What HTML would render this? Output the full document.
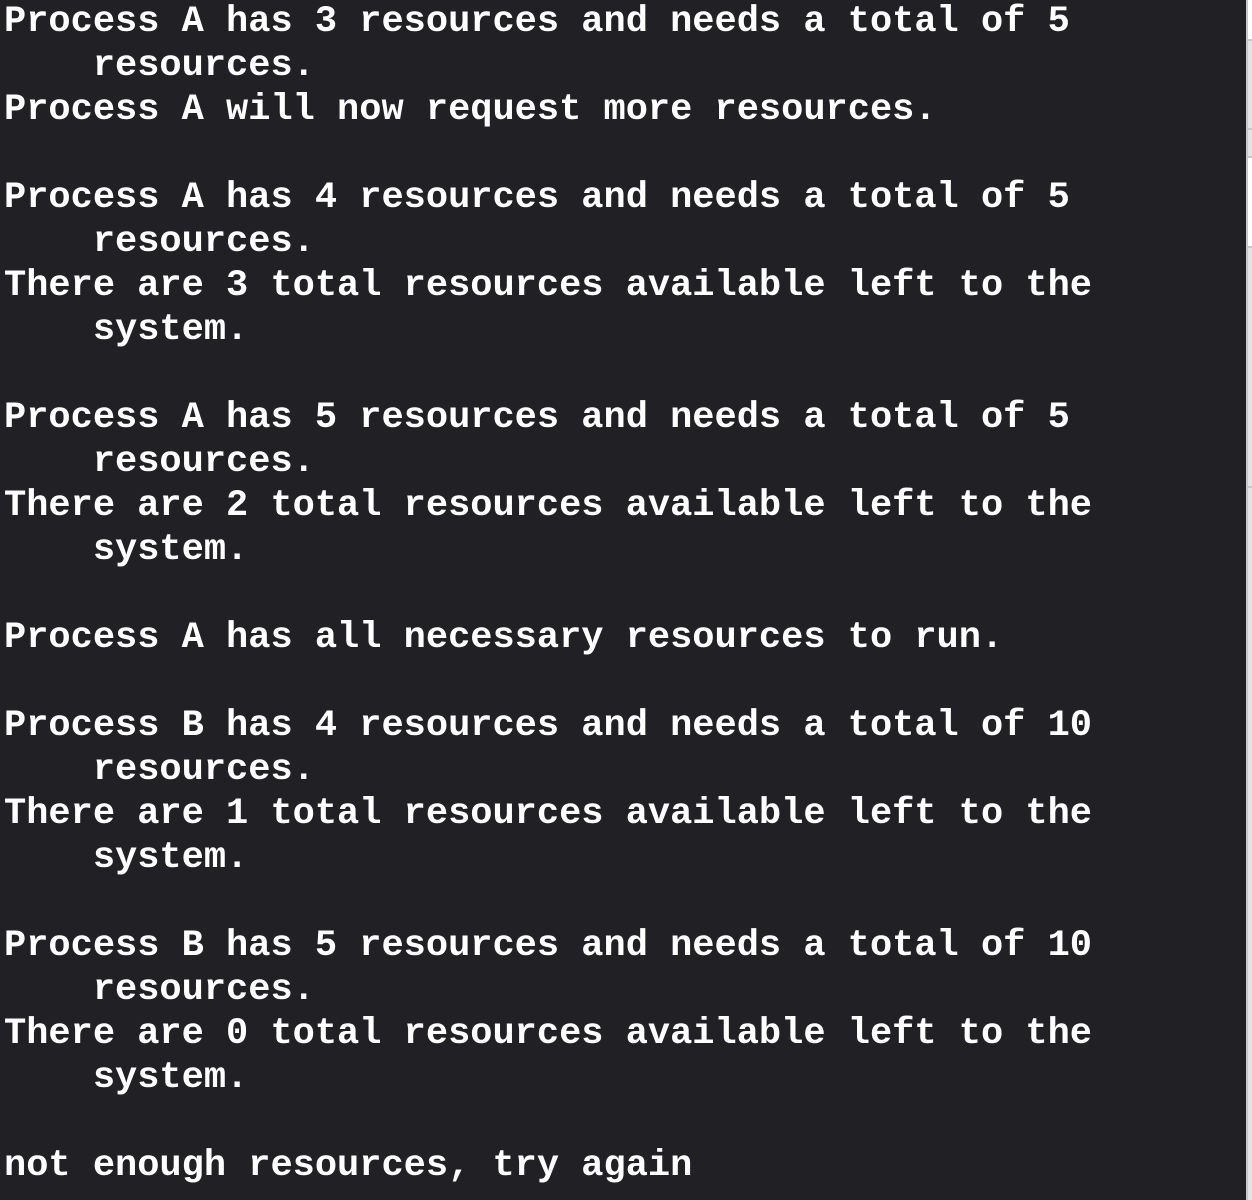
<!DOCTYPE html>
<html><head><meta charset="utf-8"><style>
html,body{margin:0;padding:0;width:1252px;height:1200px;overflow:hidden;background:#202025;}
pre{position:absolute;left:4px;top:0px;margin:0;font-family:"Liberation Mono",monospace;font-weight:bold;font-size:37px;line-height:44px;color:#ffffff;}
.strip{position:absolute;left:1246px;width:6px;}
</style></head><body>
<pre>Process A has 3 resources and needs a total of 5
    resources.
Process A will now request more resources.

Process A has 4 resources and needs a total of 5
    resources.
There are 3 total resources available left to the
    system.

Process A has 5 resources and needs a total of 5
    resources.
There are 2 total resources available left to the
    system.

Process A has all necessary resources to run.

Process B has 4 resources and needs a total of 10
    resources.
There are 1 total resources available left to the
    system.

Process B has 5 resources and needs a total of 10
    resources.
There are 0 total resources available left to the
    system.

not enough resources, try again</pre>
<div class="strip" style="top:0;height:1200px;background:#e4e4e4;border-left:2px solid #c8c8c8;box-sizing:border-box;"></div>
<div class="strip" style="left:1248px;width:4px;top:0;height:39px;background:#ffffff;"></div>
<div class="strip" style="left:1248px;width:4px;top:157px;height:90px;background:#ffffff;"></div>
<div class="strip" style="top:39px;height:2px;background:#c8c8c8;"></div>
<div class="strip" style="top:128px;height:2px;background:#c8c8c8;"></div>
<div class="strip" style="top:156px;height:2px;background:#c8c8c8;"></div>
<div class="strip" style="top:246px;height:2px;background:#c8c8c8;"></div>
<div class="strip" style="top:486px;height:2px;background:#c8c8c8;"></div>
</body></html>
